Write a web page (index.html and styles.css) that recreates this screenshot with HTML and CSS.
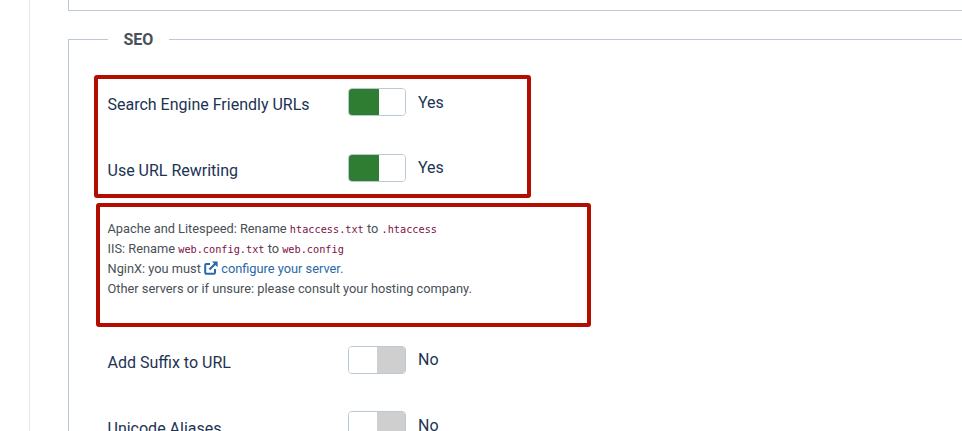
FILE: index.html
```html
<!DOCTYPE html>
<html lang="en">
<head>
<meta charset="utf-8">
<title>SEO settings</title>
<link rel="stylesheet" href="styles.css">
</head>
<body>
<main class="page">
  <div class="prev-fieldset"></div>
  <fieldset class="fieldset">
    <legend class="legend">SEO</legend>
    <div class="row">
      <span class="label">Search Engine Friendly URLs</span>
      <span class="switch"><span class="half on"></span><span class="half"></span></span>
      <span class="value">Yes</span>
    </div>
    <div class="row">
      <span class="label">Use URL Rewriting</span>
      <span class="switch"><span class="half on"></span><span class="half"></span></span>
      <span class="value">Yes</span>
    </div>
    <div class="note">
      <div>Apache and Litespeed: Rename <code>htaccess.txt</code> to <code>.htaccess</code></div>
      <div>IIS: Rename <code>web.config.txt</code> to <code>web.config</code></div>
      <div>NginX: you must <a class="link" href="#"><svg class="ext" viewBox="0 0 14 14" width="14" height="14" aria-hidden="true"><path d="M11 8v3.6a1.2 1.2 0 0 1-1.2 1.2H2.4a1.2 1.2 0 0 1-1.2-1.2V4.2A1.2 1.2 0 0 1 2.4 3H6" fill="none" stroke="currentColor" stroke-width="2"/><path d="M5.4 8.6 11.6 2.4" fill="none" stroke="currentColor" stroke-width="2.1"/><path d="M8 .6h5.6v5.6z" fill="currentColor"/></svg> configure your server.</a></div>
      <div>Other servers or if unsure: please consult your hosting company.</div>
    </div>
    <div class="row">
      <span class="label">Add Suffix to URL</span>
      <span class="switch"><span class="half"></span><span class="half off"></span></span>
      <span class="value">No</span>
    </div>
    <div class="row">
      <span class="label">Unicode Aliases</span>
      <span class="switch"><span class="half"></span><span class="half off"></span></span>
      <span class="value">No</span>
    </div>
  </fieldset>
  <div class="mark mark-a"></div>
  <div class="mark mark-b"></div>
</main>
</body>
</html>
```
FILE: styles.css
```css
html, body {
  margin: 0;
  height: 431px;
  overflow: hidden;
  background: #fff;
}
.page {
  position: relative;
  height: 431px;
  margin-left: 29px;
  padding-left: 38px;
  border-left: 1px solid #e1e7ee;
  font-family: Roboto, sans-serif;
  color: #495057;
  overflow: hidden;
}
.prev-fieldset {
  height: 10px;
  border-left: 1px solid #bcc8d8;
  border-bottom: 1px solid #bcc8d8;
}
.fieldset {
  margin: 17px -20px 0 0;
  padding: 0 0 0 38.5px;
  border: 0 solid #bcc8d8;
  border-width: 1px 0 0 1px;
  min-width: 0;
}
.legend {
  margin-left: 0;
  padding: 2px 16px 0;
  font-size: 16px;
  font-weight: 700;
  line-height: 20px;
  color: #495057;
}
.row {
  display: flex;
  align-items: flex-start;
  height: 65.4px;
}
.fieldset > .row:first-of-type {
  margin-top: 38.2px;
}
.label {
  width: 240.5px;
  font-size: 16px;
  line-height: 24px;
  padding-top: 5.2px;
  color: #1c3354;
}
.switch {
  display: flex;
  width: 56px;
  height: 26px;
  border: 1px solid #b9c8d4;
  border-radius: 4px;
  overflow: hidden;
}
.half { flex: 1; background: #fff; }
.half.on { flex: 0 0 30px; background: #2f7d32; }
.half.off { background: #cfcfcf; }
.value {
  margin-left: 12px;
  font-size: 16px;
  line-height: 24px;
  margin-top: 2.4px;
  color: #1c3354;
}
.note {
  margin: -3px 0 0;
  height: 130px;
  padding-top: 3px;
  box-sizing: border-box;
  font-size: 12.8px;
  line-height: 20px;
  color: #495057;
}
code {
  font-family: "DejaVu Sans Mono", monospace;
  font-size: 10.24px;
  line-height: 1;
  color: #7b1145;
}
.link { color: #2a69a8; text-decoration: none; }
.ext { vertical-align: -2px; }
.mark {
  position: absolute;
  border: 4px solid #b30c00;
  border-radius: 3px;
  box-sizing: border-box;
}
.mark-a { left: 64px; top: 75px; width: 437px; height: 123px; }
.mark-b { left: 66px; top: 203px; width: 495px; height: 124px; }
```
